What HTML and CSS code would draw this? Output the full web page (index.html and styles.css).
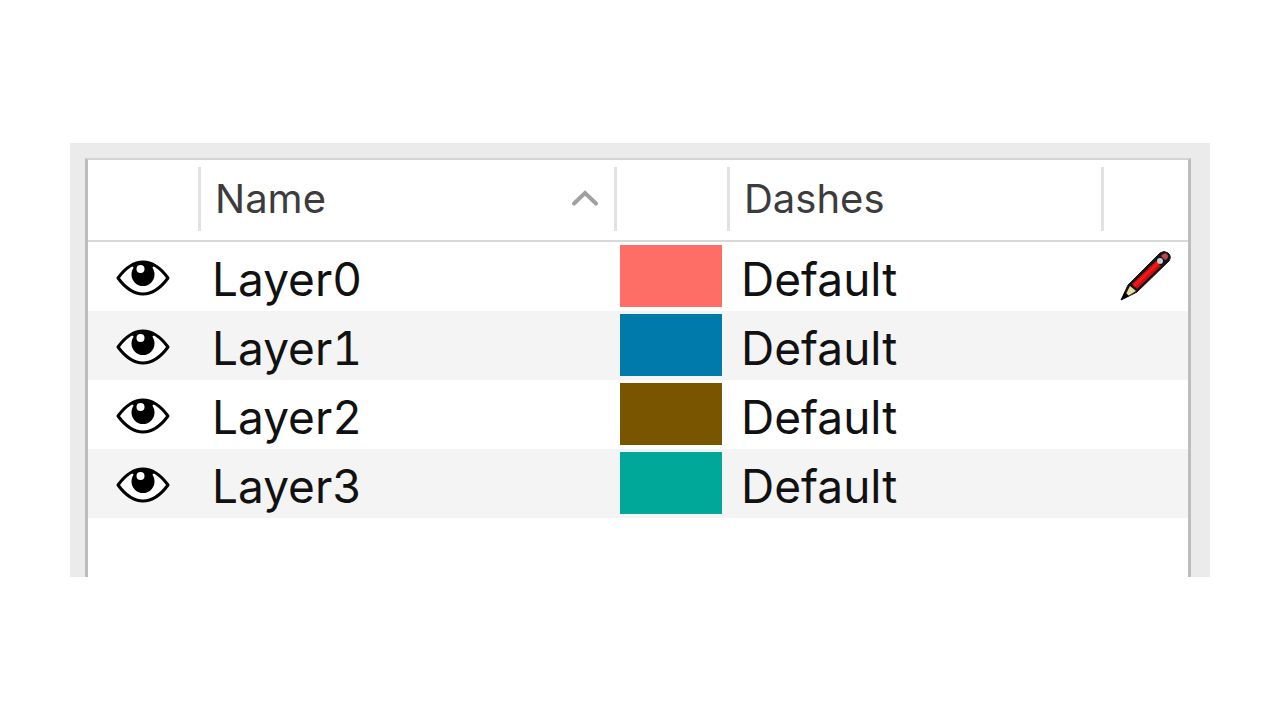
FILE: index.html
```html
<!DOCTYPE html>
<html lang="en">
<head>
    <meta charset="UTF-8">
    <meta name="viewport" content="width=device-width, initial-scale=1.0">
    <title>Layers</title>
    <link rel="stylesheet" href="styles.css">
</head>
<body>
    <!-- Shared eye icon -->
    <svg class="sprite" width="0" height="0" aria-hidden="true">
        <symbol id="eye" viewBox="0 0 54 36">
            <path d="M2 18C9 8.500 17 2 27 2s18 6.500 25 16C45 27.500 37 34 27 34S9 27.500 2 18z" fill="#fff" stroke="#000" stroke-width="3" stroke-linejoin="round"/>
            <path d="M16 6Q27 0 38 6L36 8H18z"/>
            <circle cx="27" cy="14.500" r="11.500"/>
            <circle cx="24.500" cy="9" r="4" fill="#fff"/>
        </symbol>
    </svg>

    <main class="panel">
        <div class="layer-list">
            <table>
                <colgroup>
                    <col class="col-icon">
                    <col class="col-name">
                    <col class="col-icon">
                    <col class="col-dashes">
                    <col class="col-edit">
                </colgroup>
                <thead>
                    <tr>
                        <th aria-label="Visible"><div class="head-cell"></div></th>
                        <th aria-sort="ascending">
                            <button class="head-cell">
                                Name
                                <svg width="28" height="18" viewBox="0 0 28 18" fill="none" stroke="#a0a0a0" stroke-width="4" stroke-linecap="round">
                                    <path d="M3 14.500L14 4l11 10.500"/>
                                </svg>
                            </button>
                        </th>
                        <th aria-label="Color"><div class="head-cell"></div></th>
                        <th><div class="head-cell">Dashes</div></th>
                        <th aria-label="Active"></th>
                    </tr>
                </thead>
                <tbody>
                    <tr>
                        <td><button class="eye" aria-label="Toggle Layer0"><svg><use href="#eye"/></svg></button></td>
                        <td class="text">Layer0</td>
                        <td><button class="swatch red" aria-label="Layer0 color"></button></td>
                        <td class="text">Default</td>
                        <td>
                            <svg class="pencil" viewBox="0 0 52 52" role="img" aria-label="Active layer">
                                <path d="M1 50L8 35 40 3Q44 0 48 3t1 8L17 42z" fill="#151515" stroke="#151515" stroke-width="1" stroke-linejoin="round"/>
                                <path d="M6 44L10 36l6 5-8 5z" fill="#e6dda0"/>
                                <path d="M1 50l4-8 4 4z" fill="#000"/>
                                <path d="M12 34L36 11l5 5-24 23z" fill="#cc1010"/>
                                <path d="M14 36L38 13" stroke="#f51818" stroke-width="3"/>
                                <circle cx="40" cy="11" r="3" fill="#c3cdd2"/>
                                <path d="M42 5q3-3 5-1t0 5l-2 1-4-4z" fill="#c0454f"/>
                            </svg>
                        </td>
                    </tr>
                    <tr>
                        <td><button class="eye" aria-label="Toggle Layer1"><svg><use href="#eye"/></svg></button></td>
                        <td class="text">Layer1</td>
                        <td><button class="swatch blue" aria-label="Layer1 color"></button></td>
                        <td class="text">Default</td>
                        <td></td>
                    </tr>
                    <tr>
                        <td><button class="eye" aria-label="Toggle Layer2"><svg><use href="#eye"/></svg></button></td>
                        <td class="text">Layer2</td>
                        <td><button class="swatch brown" aria-label="Layer2 color"></button></td>
                        <td class="text">Default</td>
                        <td></td>
                    </tr>
                    <tr>
                        <td><button class="eye" aria-label="Toggle Layer3"><svg><use href="#eye"/></svg></button></td>
                        <td class="text">Layer3</td>
                        <td><button class="swatch teal" aria-label="Layer3 color"></button></td>
                        <td class="text">Default</td>
                        <td></td>
                    </tr>
                </tbody>
            </table>
        </div>
    </main>
</body>
</html>
```
FILE: styles.css
```css
* {
    margin: 0;
    padding: 0;
    box-sizing: border-box;
}

body {
    min-height: 100vh;
    display: flex;
    align-items: center;
    padding: 0 70px;
    background: #fff;
    font-family: Inter, "Liberation Sans", sans-serif;
}

.sprite {
    position: absolute;
}

.panel {
    flex: 1;
    padding: 15px 19px 0 15px;
    background: #ebebeb;
}

.layer-list {
    padding-bottom: 59px;
    background: #fff;
    border: 3px solid #bdbdbd;
    border-top: 2px solid #d4d4d4;
    border-bottom: none;
}

table {
    width: 100%;
    table-layout: fixed;
    border-collapse: separate;
    border-spacing: 0;
}

.col-icon {
    width: 113px;
}

.col-dashes {
    width: 34%;
}

.col-edit {
    width: 84px;
}

th {
    height: 82px;
    padding-bottom: 2px;
    border-bottom: 2px solid #d8d8d8;
    text-align: left;
}

button {
    display: block;
    background: none;
    border: none;
    font-family: inherit;
    cursor: pointer;
}

.head-cell {
    display: flex;
    align-items: center;
    justify-content: space-between;
    width: 100%;
    height: 64px;
    padding: 0 15px 2px 14px;
    border-right: 3px solid #e2e2e2;
    color: #3c3c3c;
    font-size: 40px;
    font-weight: 400;
}

td {
    height: 69px;
    padding-bottom: 1px;
    vertical-align: middle;
}

tbody tr:nth-child(even) {
    background: #f4f4f4;
}

.text {
    padding: 4px 0 0 11px;
    color: #111;
    font-size: 46px;
    line-height: 60px;
    font-variant-numeric: tabular-nums;
}

.eye {
    margin: 4px 0 0 28px;
}

.eye svg {
    display: block;
    width: 54px;
    height: 36px;
}

.swatch {
    width: 102px;
    height: 62px;
    margin-left: 3px;
}

.red { background: #ff6e66; }
.blue { background: #007aaa; }
.brown { background: #7a5500; }
.teal { background: #00a89a; }

.pencil {
    display: block;
    width: 52px;
    height: 52px;
    margin-left: 16px;
}
```
